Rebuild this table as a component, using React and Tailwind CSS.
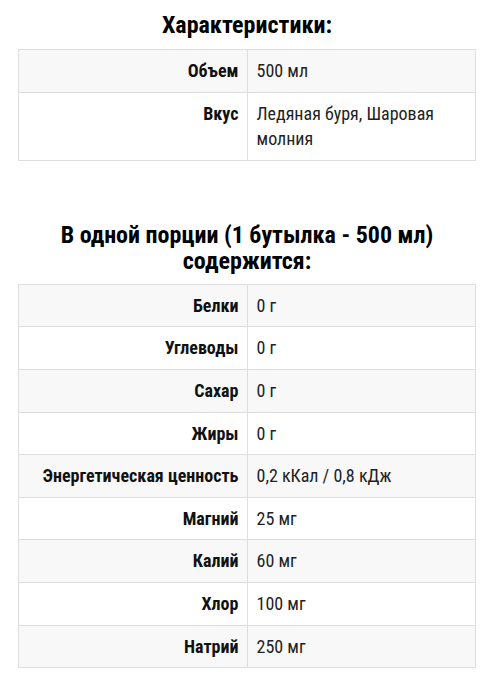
const specs = [
  ["Объем", "500 мл"],
  ["Вкус", "Ледяная буря, Шаровая молния"],
];

const nutrition = [
  ["Белки", "0 г"],
  ["Углеводы", "0 г"],
  ["Сахар", "0 г"],
  ["Жиры", "0 г"],
  ["Энергетическая ценность", "0,2 кКал / 0,8 кДж"],
  ["Магний", "25 мг"],
  ["Калий", "60 мг"],
  ["Хлор", "100 мг"],
  ["Натрий", "250 мг"],
];

function PropTable({ rows }) {
  return (
    <table className="w-full table-fixed border-collapse border border-[#dedede] text-[18px] leading-[25.6px]">
      <tbody>
        {rows.map(([label, value], i) => (
          <tr key={label} className={i % 2 === 0 ? "bg-[#f8f8f8]" : "bg-white"}>
            <th className="w-1/2 border border-[#dedede] py-2 pl-2 pr-[8px] text-right align-top font-bold text-[#111]">
              {label}
            </th>
            <td className="border border-[#dedede] py-2 pl-[9px] pr-2 text-left align-top text-[#222]">
              {value}
            </td>
          </tr>
        ))}
      </tbody>
    </table>
  );
}

export default function App() {
  return (
    <div
      className="min-h-[682px] bg-white pl-[18px] pr-[16px] pt-[12px] text-black"
      style={{ fontFamily: "'Roboto Condensed', 'Liberation Sans Narrow', Roboto, sans-serif" }}
    >
      <h2 className="mb-[11px] text-center text-[24px] font-bold leading-[26px]">Характеристики:</h2>
      <PropTable rows={specs} />

      <h2 className="mb-[10px] mt-[61px] text-center text-[24px] font-bold leading-[26px]">
        В одной порции (1 бутылка - 500 мл)
        <br />
        содержится:
      </h2>
      <PropTable rows={nutrition} />
    </div>
  );
}
